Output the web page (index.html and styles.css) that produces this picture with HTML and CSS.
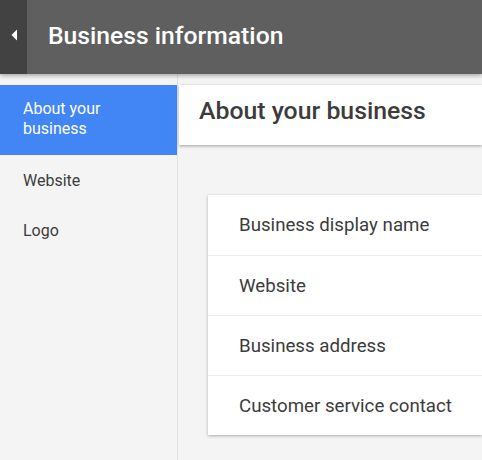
FILE: index.html
```html
<!DOCTYPE html>
<html>
<head>
<meta charset="utf-8">
<link rel="stylesheet" href="styles.css">
</head>
<body>
<div class="app">
  <header class="topbar">
    <div class="back">
      <svg width="8" height="12" viewBox="0 0 8 12"><path d="M7 0.5 L1.5 6 L7 11.5 Z" fill="#fff"/></svg>
    </div>
    <h1 class="title">Business information</h1>
  </header>
  <div class="body">
    <nav class="sidebar">
      <div class="nav-item active">About your<br>business</div>
      <div class="nav-item">Website</div>
      <div class="nav-item">Logo</div>
    </nav>
    <main class="main">
      <div class="section-head">About your business</div>
      <div class="card">
        <div class="row">Business display name</div>
        <div class="row">Website</div>
        <div class="row">Business address</div>
        <div class="row">Customer service contact</div>
      </div>
    </main>
  </div>
</div>
</body>
</html>
```
FILE: styles.css
```css
html, body {
  margin: 0;
  padding: 0;
  width: 482px;
  height: 460px;
  overflow: hidden;
  background: #f4f4f4;
  font-family: Roboto, "Liberation Sans", sans-serif;
}
.app {
  display: flex;
  flex-direction: column;
  height: 460px;
}
.topbar {
  height: 74px;
  flex: none;
  display: flex;
  align-items: stretch;
  background: #5f5f5f;
  box-shadow: 0 2px 4px rgba(0,0,0,0.3);
  position: relative;
  z-index: 3;
}
.back {
  width: 27px;
  background: #424242;
  display: flex;
  align-items: center;
  justify-content: center;
  padding-bottom: 4px;
  box-sizing: border-box;
}
.title {
  margin: 0 0 0 21px;
  align-self: center;
  padding-bottom: 3px;
  font-size: 24.7px;
  font-weight: 500;
  color: #fff;
  white-space: nowrap;
}
.body {
  flex: 1;
  display: flex;
  min-height: 0;
}
.sidebar {
  width: 177px;
  flex: none;
  border-right: 1px solid #e2e2e2;
  background: #f4f4f4;
  padding-top: 11px;
  box-sizing: content-box;
}
.nav-item {
  height: 50px;
  padding-left: 23px;
  display: flex;
  align-items: center;
  font-size: 16px;
  color: #3c3c3c;
}
.nav-item.active {
  height: 70px;
  background: #4285f4;
  color: #fff;
  line-height: 20px;
  padding-bottom: 2px;
  box-sizing: border-box;
}
.main {
  flex: 1;
  padding-top: 11px;
  min-width: 0;
}
.section-head {
  height: 60px;
  margin-left: 1px;
  background: #fff;
  box-shadow: 0 1px 3px rgba(0,0,0,0.35);
  display: flex;
  align-items: center;
  padding-left: 20px;
  padding-bottom: 10px;
  box-sizing: border-box;
  font-size: 24.8px;
  font-weight: 500;
  color: #3c3c3c;
  white-space: nowrap;
}
.card {
  margin: 50px 0 0 30px;
  background: #fff;
  box-shadow: 0 1px 3px rgba(0,0,0,0.3);
}
.row {
  height: 60px;
  display: flex;
  align-items: center;
  padding-left: 31px;
  font-size: 18.7px;
  color: #3c3c3c;
  border-top: 1px solid #ececec;
  box-sizing: border-box;
  white-space: nowrap;
}
.row:first-child {
  border-top: none;
}
```
